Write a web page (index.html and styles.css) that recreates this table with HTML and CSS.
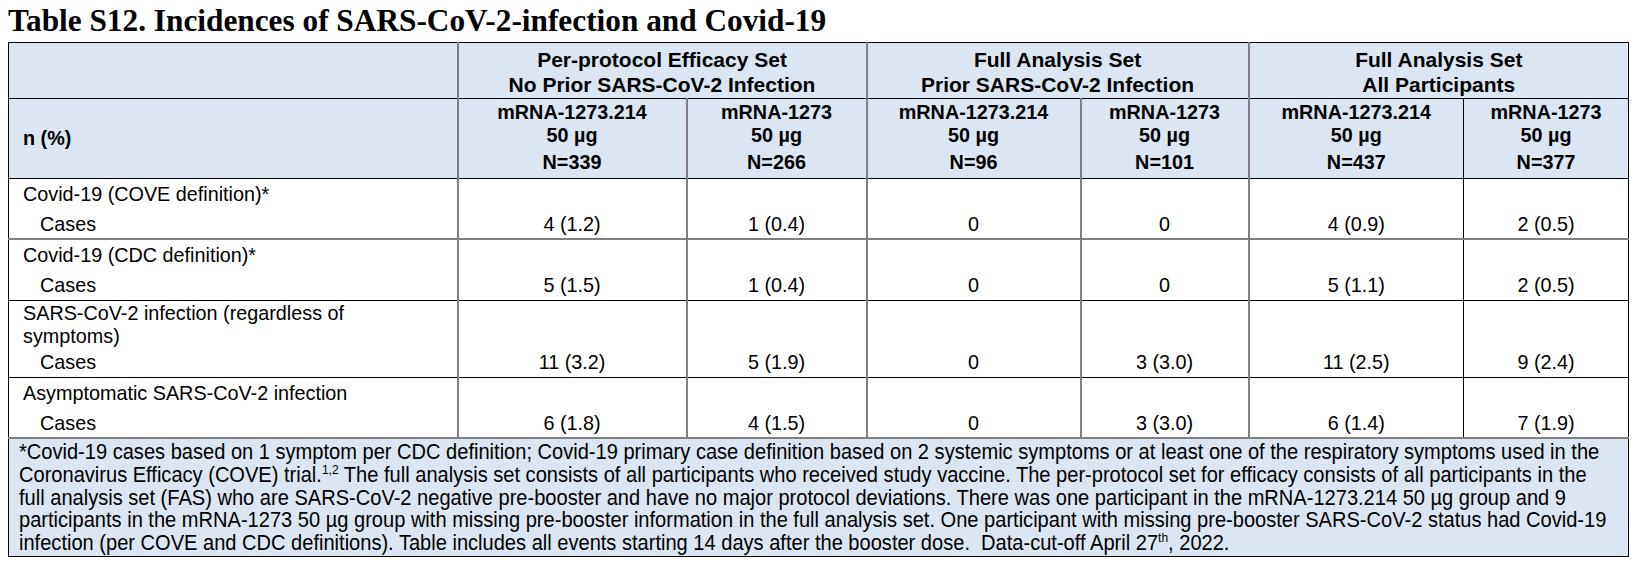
FILE: index.html
```html
<!DOCTYPE html>
<html>
<head>
<meta charset="utf-8">
<link rel="stylesheet" href="styles.css">
</head>
<body>
<h1 class="title">Table S12. Incidences of SARS-CoV-2-infection and Covid-19</h1>
<table class="tbl">
  <colgroup>
    <col class="w-label"><col class="w-a"><col class="w-b"><col class="w-c"><col class="w-d"><col class="w-e"><col class="w-f">
  </colgroup>
  <thead>
    <tr class="hrow1">
      <th class="lbl"></th>
      <th colspan="2" class="grp">Per-protocol Efficacy Set<br>No Prior SARS-CoV-2 Infection</th>
      <th colspan="2" class="grp">Full Analysis Set<br>Prior SARS-CoV-2 Infection</th>
      <th colspan="2" class="grp">Full Analysis Set<br>All Participants</th>
    </tr>
    <tr class="hrow2">
      <th class="lbl nlabel">n (%)</th>
      <th class="arm"><div>mRNA-1273.214</div><div>50 µg</div><div class="nn">N=339</div></th>
      <th class="arm"><div>mRNA-1273</div><div>50 µg</div><div class="nn">N=266</div></th>
      <th class="arm"><div>mRNA-1273.214</div><div>50 µg</div><div class="nn">N=96</div></th>
      <th class="arm"><div>mRNA-1273</div><div>50 µg</div><div class="nn">N=101</div></th>
      <th class="arm"><div>mRNA-1273.214</div><div>50 µg</div><div class="nn">N=437</div></th>
      <th class="arm thin"><div>mRNA-1273</div><div>50 µg</div><div class="nn">N=377</div></th>
    </tr>
  </thead>
  <tbody>
    <tr class="grayline">
      <td class="lbl"><div>Covid-19 (COVE definition)*</div><div class="cases">Cases</div></td>
      <td class="num">4 (1.2)</td><td class="num">1 (0.4)</td><td class="num">0</td><td class="num">0</td><td class="num">4 (0.9)</td><td class="num thin">2 (0.5)</td>
    </tr>
    <tr>
      <td class="lbl"><div>Covid-19 (CDC definition)*</div><div class="cases">Cases</div></td>
      <td class="num">5 (1.5)</td><td class="num">1 (0.4)</td><td class="num">0</td><td class="num">0</td><td class="num">5 (1.1)</td><td class="num thin">2 (0.5)</td>
    </tr>
    <tr class="tight">
      <td class="lbl"><div>SARS-CoV-2 infection (regardless of<br>symptoms)</div><div class="cases">Cases</div></td>
      <td class="num">11 (3.2)</td><td class="num">5 (1.9)</td><td class="num">0</td><td class="num">3 (3.0)</td><td class="num">11 (2.5)</td><td class="num thin">9 (2.4)</td>
    </tr>
    <tr class="grayline">
      <td class="lbl"><div>Asymptomatic SARS-CoV-2 infection</div><div class="cases">Cases</div></td>
      <td class="num">6 (1.8)</td><td class="num">4 (1.5)</td><td class="num">0</td><td class="num">3 (3.0)</td><td class="num">6 (1.4)</td><td class="num thin">7 (1.9)</td>
    </tr>
    <tr>
      <td colspan="7" class="foot"><div class="foot-text">*Covid-19 cases based on 1 symptom per CDC definition; Covid-19 primary case definition based on 2 systemic symptoms or at least one of the respiratory symptoms used in the<br>Coronavirus Efficacy (COVE) trial.<sup>1,2</sup> The full analysis set consists of all participants who received study vaccine. The per-protocol set for efficacy consists of all participants in the<br>full analysis set (FAS) who are SARS-CoV-2 negative pre-booster and have no major protocol deviations. There was one participant in the mRNA-1273.214 50 µg group and 9<br>participants in the mRNA-1273 50 µg group with missing pre-booster information in the full analysis set. One participant with missing pre-booster SARS-CoV-2 status had Covid-19<br>infection (per COVE and CDC definitions). Table includes all events starting 14 days after the booster dose.&nbsp; Data-cut-off April 27<sup>th</sup>, 2022.</div></td>
    </tr>
  </tbody>
</table>
</body>
</html>
```

FILE: styles.css
```css
html, body {
  background: #ffffff;
}
body {
  margin: 0;
  padding: 4px 7px 0 8px;
  color: #000;
  font-family: "Liberation Sans", Arial, sans-serif;
}
.title {
  margin: 0 0 4px 0;
  font-family: "Liberation Serif", "Times New Roman", serif;
  font-weight: bold;
  font-size: 31.3px;
  line-height: 34px;
}
.tbl {
  border-collapse: collapse;
  table-layout: fixed;
  width: 1620px;
  border: 1px solid #000;
  font-size: 19.8px;
}
.w-label { width: 449px; }
.w-a { width: 229px; }
.w-b { width: 180px; }
.w-c { width: 214px; }
.w-d { width: 168px; }
.w-e { width: 215px; }
.w-f { width: 165px; }

.tbl th, .tbl td {
  border-left: 2px solid #808080;
  border-bottom: 1px solid #000;
  padding: 0;
}
.tbl th:first-child, .tbl td:first-child {
  border-left: 1px solid #000;
}
.tbl .thin {
  border-left: 1px solid #000;
}
thead th {
  background: #dce6f2;
  font-weight: bold;
  text-align: center;
}
.hrow1 th {
  padding: 4px 0 1px 0;
  font-size: 21px;
  line-height: 25px;
  vertical-align: top;
}
.hrow2 th {
  padding: 2px 0 4px 0;
  line-height: 23px;
  vertical-align: top;
}
.hrow2 .nn {
  margin-top: 4px;
}
.hrow2 .nlabel {
  text-align: left;
  vertical-align: middle;
  padding: 0 0 0 14px;
}
tbody td {
  line-height: 22.7px;
}
td.lbl {
  padding: 4px 8px 3px 14px;
  vertical-align: top;
  text-align: left;
}
td.lbl .cases {
  margin-top: 7px;
  margin-left: 17px;
}
tr.tight td.lbl {
  padding-top: 1px;
}
tr.tight td.lbl .cases {
  margin-top: 4px;
}
td.num {
  text-align: center;
  vertical-align: bottom;
  padding: 0 0 3px 0;
}
tr.grayline td {
  border-bottom: 2px solid #808080;
}
td.foot {
  background: #dce6f2;
  padding: 2px 4px 2px 10px;
  vertical-align: top;
  overflow: hidden;
}
.foot-text {
  display: inline-block;
  font-size: 22px;
  line-height: 22.6px;
  white-space: nowrap;
  transform: scaleX(0.912);
  transform-origin: left top;
}
.foot-text sup {
  font-size: 0.6em;
  line-height: 0;
  vertical-align: 0.6em;
}
```
